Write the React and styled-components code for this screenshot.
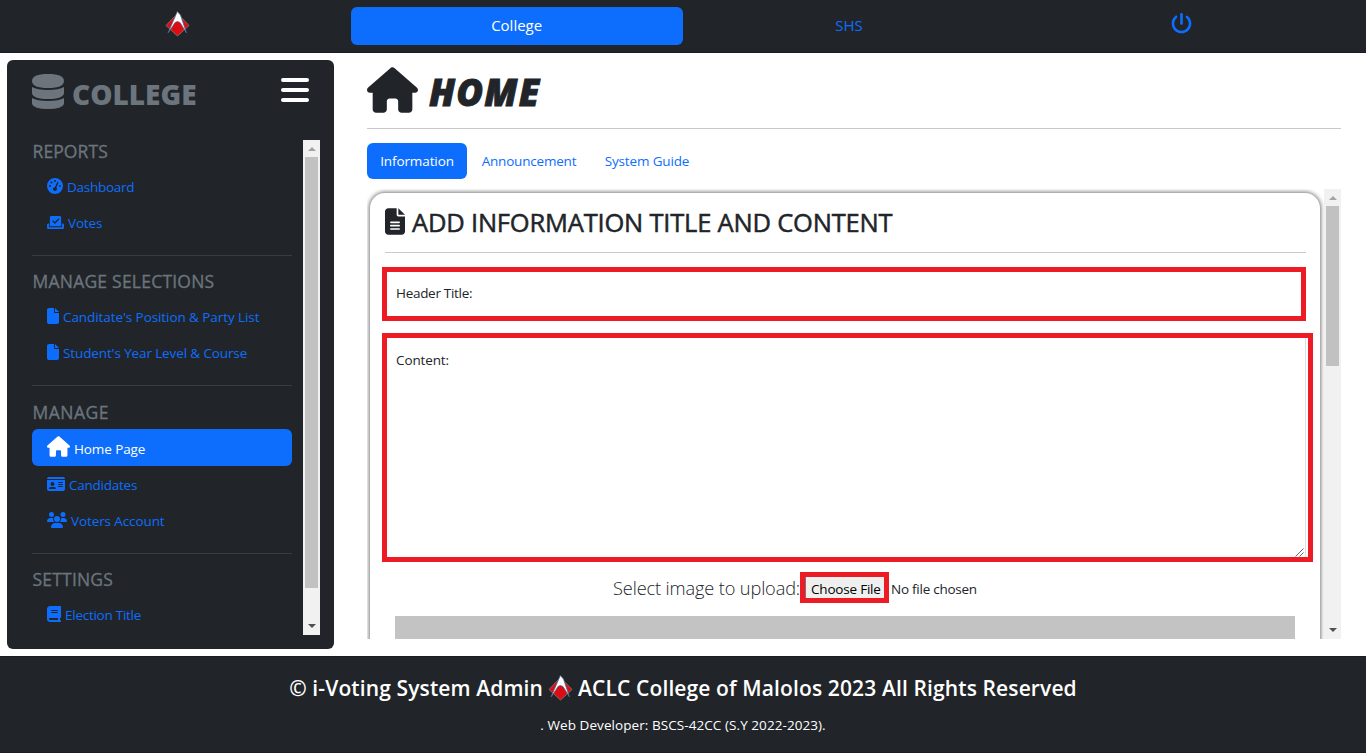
import React from 'react';
import styled, { createGlobalStyle, css } from 'styled-components';
import {
  FaGaugeHigh, FaCheckToSlot, FaFile, FaFileLines,
  FaHouse, FaIdCard, FaUsers, FaBook, FaPowerOff,
} from 'react-icons/fa6';

const GlobalStyle = createGlobalStyle`
  * { box-sizing: border-box; }
  body {
    margin: 0;
    background: #fff;
    color: #212529;
    font-family: 'Open Sans', 'Noto Sans', sans-serif;
    font-size: 13.5px;
    overflow: hidden;
  }
`;

const Page = styled.div`
  display: flex;
  flex-direction: column;
  height: 753px;
`;

const TopBar = styled.header`
  display: flex;
  height: 53px;
  padding: 7px 18px 0 0;
  background: #212529;
  border-bottom: 1px solid #1a1b24;
`;

const LogoCell = styled.div`
  width: 351px;
  padding: 4px 0 0 164.5px;
`;

const NavPill = styled.a`
  flex: 1;
  display: flex;
  align-items: center;
  justify-content: center;
  height: 38px;
  padding: 0 1px 2px 0;
  border-radius: 6px;
  font-size: 15px;
  letter-spacing: ${(p) => p.$ls || 0}px;
  color: ${(p) => (p.$active ? '#fff' : '#0d6efd')};
  background: ${(p) => (p.$active ? '#0d6efd' : 'transparent')};
  svg { margin: 0 0 3px 1px; }
`;

const Body = styled.div`
  display: flex;
  gap: 33px;
  height: 603px;
  padding: 7px 25px 7px 7px;
`;

const Sidebar = styled.aside`
  width: 327px;
  padding: 13px 14px 14px 25px;
  border-radius: 6px;
  background: #212529;
`;

const SideHeader = styled.div`
  display: flex;
  height: 67px;
  color: #6c757d;
`;

const SideTitle = styled.h1`
  flex: 1;
  margin: 2px 0 0 8px;
  font-size: 28px;
  line-height: 38px;
  font-weight: 800;
`;

const MenuIcon = styled.span`
  margin: 5px 11px 0 0;
  color: #fff;
  svg { display: block; }
`;

const ScrollArea = styled.div`
  display: flex;
  height: ${(p) => p.$h}px;
  overflow: hidden;
`;

const Menu = styled.nav`
  width: 260px;
  margin-right: 11px;
`;

const Section = styled.section`
  & + & {
    margin-top: 14px;
    padding-top: 14px;
    border-top: 1px solid #383c40;
  }
`;

const SectionTitle = styled.h2`
  height: 29px;
  margin: 0;
  padding-left: 0.5px;
  font-size: 17.5px;
  line-height: ${(p) => (p.$low ? 25 : 23)}px;
  font-weight: 400;
  letter-spacing: ${(p) => p.$ls || 0}px;
  color: #6c757d;
  -webkit-text-stroke: 0.3px #6c757d;
`;

const MenuLink = styled.a`
  display: flex;
  align-items: center;
  gap: 4px;
  height: 36px;
  padding-left: 15px;
  border-radius: 6px;
  color: #0d6efd;
  letter-spacing: ${(p) => p.$ls || 0}px;
  white-space: nowrap;
  svg { margin-bottom: 2px; flex: none; }
  span { margin-bottom: 1px; }
  ${(p) => p.$active && css`
    height: 37px;
    margin-bottom: 1px;
    color: #fff;
    background: #0d6efd;
    padding-top: 3px;
    svg { margin-bottom: 5px; }
  `}
`;

const Track = styled.div`
  display: flex;
  flex-direction: column;
  width: 17px;
  background: #f1f1f1;
`;

const Thumb = styled.div`
  width: 13px;
  height: ${(p) => p.$h}px;
  margin: 0 auto auto;
  background: #c1c1c1;
`;

const Arrow = styled.span`
  display: block;
  width: 0;
  height: 0;
  margin: ${(p) => (p.$up ? '7px 4px 6px 5px' : '0 4px 7px 5px')};
  border: 4px solid transparent;
  border-top: ${(p) => (p.$up ? '0' : '4px solid #505050')};
  border-bottom: ${(p) => (p.$up ? '4px solid #a3a3a3' : '0')};
`;

const Main = styled.main`
  flex: 1;
  display: flex;
  flex-direction: column;
`;

const PageTitle = styled.h1`
  display: flex;
  align-items: center;
  gap: 11px;
  height: 69px;
  margin: 0 0 14px;
  padding-bottom: 9px;
  border-bottom: 1px solid #c8c9ca;
  font-size: 36.5px;
  font-style: italic;
  font-weight: 800;
  letter-spacing: ${(p) => p.$ls}px;
  -webkit-text-stroke: 0.9px #212529;
  svg { stroke: none; }
  span { margin-top: 5px; }
`;

const Tabs = styled.div`
  display: flex;
  height: 36px;
  margin-bottom: 10px;
`;

const Tab = styled.a`
  display: flex;
  align-items: center;
  justify-content: center;
  width: ${(p) => p.$w}px;
  border-radius: 6px;
  letter-spacing: ${(p) => p.$ls || 0}px;
  color: ${(p) => (p.$active ? '#fff' : '#0d6efd')};
  background: ${(p) => (p.$active ? '#0d6efd' : 'transparent')};
`;

const CardClip = styled.div`
  flex: 1;
  padding: 4px 4px 0 3px;
  overflow: hidden;
`;

const Card = styled.div`
  height: 520px;
  padding: 12px 7px 0 12px;
  border-radius: 15px;
  box-shadow: 0 0 4px 1px #777;
`;

const CardTitle = styled.h2`
  display: flex;
  align-items: center;
  gap: 7px;
  height: 48px;
  margin: 0 7px 14px 3px;
  padding-bottom: 13px;
  border-bottom: 1px solid #c8c9ca;
  font-size: 25.5px;
  font-weight: 400;
  -webkit-text-stroke: 0.5px #212529;
  letter-spacing: ${(p) => p.$ls}px;
  white-space: nowrap;
  svg { stroke: none; margin-bottom: 1px; }
`;

const Field = styled.div`
  width: ${(p) => p.$w}px;
  height: ${(p) => p.$h}px;
  margin-bottom: 12px;
  padding: ${(p) => p.$pad};
  border: 5px solid #ed1c24;
  letter-spacing: ${(p) => p.$ls}px;
`;

const AreaInner = styled.div`
  display: flex;
  justify-content: space-between;
  height: 100%;
  padding-right: 1px;
  border-right: 1px solid #dfdfdf;
  svg { align-self: flex-end; }
`;

const AreaText = styled.div`
  padding-top: 13px;
`;

const UploadRow = styled.div`
  display: flex;
  align-items: center;
  height: 31px;
  margin: -2px 0 13px 231px;
  white-space: nowrap;
`;

const UploadLabel = styled.span`
  width: 187px;
  font-size: 18.2px;
  font-weight: 300;
  letter-spacing: ${(p) => p.$ls}px;
`;

const FileButton = styled.span`
  width: 89px;
  height: 31px;
  border: 5px solid #ed1c24;
  background: #efefef;
  box-shadow: inset 1px 0 #767676;
  padding: 3px 0 0 6px;
  line-height: 19px;
  color: #000;
  letter-spacing: ${(p) => p.$ls}px;
`;

const FileStatus = styled.span`
  margin: 2px 0 0 2px;
  letter-spacing: ${(p) => p.$ls}px;
`;

const Preview = styled.div`
  width: 900px;
  height: 60px;
  margin-left: 13px;
  background: #c3c3c3;
`;

const Footer = styled.footer`
  display: flex;
  flex-direction: column;
  align-items: center;
  height: 97px;
  padding-top: 17px;
  border-top: 1px solid #1a1b24;
  border-bottom: 1px solid #1a1b24;
  background: #212529;
  color: #fff;
`;

const FooterTitle = styled.div`
  display: flex;
  align-items: center;
  gap: 5px;
  height: 28px;
  font-size: 21px;
  font-weight: 600;
  letter-spacing: ${(p) => p.$ls}px;
  white-space: nowrap;
`;

const FooterNote = styled.div`
  margin-top: 14px;
  line-height: 19px;
  letter-spacing: ${(p) => p.$ls}px;
`;

const Logo = () => (
  <svg width="25" height="26" viewBox="0 0 25 26">
    <path d="M12.5 2.5 24 14.5 12.5 25 1 14.5Z" fill="#dc0d12" stroke="#8d8488" strokeWidth="0.7" />
    <path d="M12.3 0.5 3 22 7.5 15.5 10 11.5 12.3 10.5 15 11.5 17.5 15.5 21.5 22 15.5 4Z" fill="#fff" stroke="#4a6285" strokeWidth="0.8" />
  </svg>
);

const DatabaseIcon = () => (
  <svg width="32" height="37" viewBox="0 0 32 37" fill="#6c757d">
    <path d="M0 8C0 3.5 5 1 16 1S32 3.5 32 8 27 15 16 15 0 12.500 0 8Z" />
    <path d="M0 14Q5 17 16 17T32 14V20.500Q30.500 26 16 26T0 20.500Z" />
    <path d="M0 25Q5 28 16 28T32 25V31Q30.500 36 16 36T0 31Z" />
  </svg>
);

const BarsIcon = () => (
  <svg width="28" height="24" viewBox="0 0 28 24" fill="#fff">
    <rect width="28" height="4" rx="2" />
    <rect y="10" width="28" height="4" rx="2" />
    <rect y="20" width="28" height="4" rx="2" />
  </svg>
);

const Grip = () => (
  <svg width="9" height="9" viewBox="0 0 9 9" stroke="#555" strokeWidth="0.9">
    <path d="M0.5 8.5 8.5 0.5M4.5 8.5 8.5 4.5" />
  </svg>
);

const ScrollBar = ({ thumb }) => (
  <Track>
    <Arrow $up />
    <Thumb $h={thumb} />
    <Arrow />
  </Track>
);

const Glyph = ({ icon: Icon, w, h }) => <Icon style={{ width: w, height: h }} />;

const SECTIONS = [
  { title: 'REPORTS', ls: 0.1, items: [
    { icon: FaGaugeHigh, w: 16, h: 16, text: 'Dashboard', ls: -0.27 },
    { icon: FaCheckToSlot, w: 17, h: 15, text: 'Votes', ls: -0.15 },
  ] },
  { title: 'MANAGE SELECTIONS', ls: 0.22, items: [
    { icon: FaFile, w: 12, h: 16, text: "Canditate's Position & Party List", ls: -0.08 },
    { icon: FaFile, w: 12, h: 16, text: "Student's Year Level & Course", ls: -0.12 },
  ] },
  { title: 'MANAGE', ls: 0.5, low: true, items: [
    { icon: FaHouse, w: 23, h: 21, text: 'Home Page', ls: -0.1, active: true },
    { icon: FaIdCard, w: 18, h: 16, text: 'Candidates', ls: -0.24 },
    { icon: FaUsers, w: 20, h: 16, text: 'Voters Account', ls: -0.1 },
  ] },
  { title: 'SETTINGS', ls: 0.2, items: [
    { icon: FaBook, w: 14, h: 16, text: 'Election Title', ls: -0.26 },
  ] },
];

export default function App() {
  return (
    <Page>
      <GlobalStyle />
      <TopBar>
        <LogoCell><Logo /></LogoCell>
        <NavPill $active>College</NavPill>
        <NavPill>SHS</NavPill>
        <NavPill><Glyph icon={FaPowerOff} w={21} h={21} /></NavPill>
      </TopBar>
      <Body>
        <Sidebar>
          <SideHeader>
            <DatabaseIcon />
            <SideTitle>COLLEGE</SideTitle>
            <MenuIcon><BarsIcon /></MenuIcon>
          </SideHeader>
          <ScrollArea $h={495}>
            <Menu>
              {SECTIONS.map((s) => (
                <Section key={s.title}>
                  <SectionTitle $ls={s.ls} $low={s.low}>{s.title}</SectionTitle>
                  {s.items.map((it) => (
                    <MenuLink key={it.text} $active={it.active} $ls={it.ls}>
                      <Glyph icon={it.icon} w={it.w} h={it.h} />
                      <span>{it.text}</span>
                    </MenuLink>
                  ))}
                </Section>
              ))}
            </Menu>
            <ScrollBar thumb={431} />
          </ScrollArea>
        </Sidebar>
        <Main>
          <PageTitle $ls={1.2}>
            <Glyph icon={FaHouse} w={51} h={46} />
            <span>HOME</span>
          </PageTitle>
          <Tabs>
            <Tab $active $w={100} $ls={-0.1}>Information</Tab>
            <Tab $w={124} $ls={-0.2}>Announcement</Tab>
            <Tab $w={112} $ls={-0.15}>System Guide</Tab>
          </Tabs>
          <ScrollArea $h={450}>
            <CardClip>
              <Card>
                <CardTitle $ls={-0.2}>
                  <Glyph icon={FaFileLines} w={20} h={27} />
                  <span>ADD INFORMATION TITLE AND CONTENT</span>
                </CardTitle>
                <Field $w={924} $h={54} $pad="12px 9px" $ls={-0.3}>Header Title:</Field>
                <Field $w={931} $h={229} $pad="0 2px 0 9px" $ls={-0.12}>
                  <AreaInner>
                    <AreaText>Content:</AreaText>
                    <Grip />
                  </AreaInner>
                </Field>
                <UploadRow>
                  <UploadLabel $ls={-0.13}>Select image to upload:</UploadLabel>
                  <FileButton $ls={-0.2}>Choose File</FileButton>
                  <FileStatus $ls={-0.25}>No file chosen</FileStatus>
                </UploadRow>
                <Preview />
              </Card>
            </CardClip>
            <ScrollBar thumb={160} />
          </ScrollArea>
        </Main>
      </Body>
      <Footer>
        <FooterTitle $ls={0.12}>
          <span>© i-Voting System Admin</span>
          <Logo />
          <span>ACLC College of Malolos 2023 All Rights Reserved</span>
        </FooterTitle>
        <FooterNote $ls={0.07}>. Web Developer: BSCS-42CC (S.Y 2022-2023).</FooterNote>
      </Footer>
    </Page>
  );
}
